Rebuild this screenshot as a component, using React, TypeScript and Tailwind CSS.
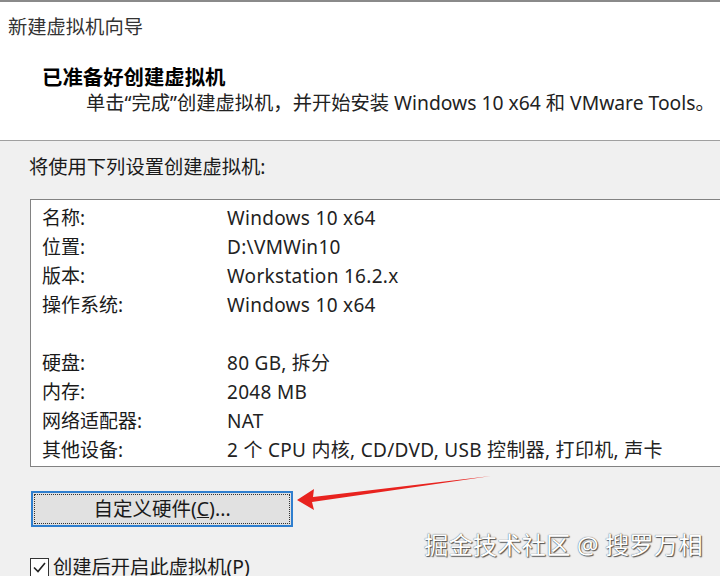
import React from 'react';

const font = '[font-family:"Noto_Sans","Noto_Sans_CJK_SC",sans-serif]';

const rows: [string, string][] = [
  ['名称:', 'Windows 10 x64'],
  ['位置:', 'D:\\VMWin10'],
  ['版本:', 'Workstation 16.2.x'],
  ['操作系统:', 'Windows 10 x64'],
  ['', ''],
  ['硬盘:', '80 GB, 拆分'],
  ['内存:', '2048 MB'],
  ['网络适配器:', 'NAT'],
  ['其他设备:', '2 个 CPU 内核, CD/DVD, USB 控制器, 打印机, 声卡'],
];

export default function App() {
  return (
    <div className={`relative w-[720px] h-[576px] overflow-hidden bg-[#f0f0f0] text-[#1a1a1a] ${font}`}>
      {/* header */}
      <div className="bg-white border-t-2 border-[#8a8a8a] border-b border-b-[#a0a0a0] h-[141px]">
        <div className="pl-[8px] pt-[12px] text-[19.3px] leading-[26px] text-[#333]">新建虚拟机向导</div>
        <div className="pl-[42px] pt-[24px] text-[20.4px] leading-[26px] font-bold text-black">已准备好创建虚拟机</div>
        <div className="pl-[86px] pt-[0px] text-[19.3px] leading-[26px] text-[#222] whitespace-nowrap">
          单击“完成”创建虚拟机，并开始安装 Windows 10 x64 和 VMware Tools。
        </div>
      </div>

      {/* body */}
      <div className="pl-[29px] pt-[13px] text-[19.3px] leading-[26px]">将使用下列设置创建虚拟机:</div>

      <div className="ml-[30px] mt-[19px] w-[720px] h-[268px] bg-white border border-[#828282] pt-[4px]">
        {rows.map(([k, v], i) => (
          <div key={i} className="flex h-[29px] items-center text-[19px]">
            <div className="w-[196px] pl-[11px] shrink-0">{k}</div>
            <div className="whitespace-nowrap text-[#222] tracking-[0.3px]">{v}</div>
          </div>
        ))}
      </div>

      <div className="ml-[31px] mt-[24px] w-[262px] h-[36px] border-2 border-[#2f7fcf] bg-[#e1e1e1] p-[1px]">
        <div className="h-full w-full border border-dotted border-[#333] flex items-center justify-center text-[19.5px]">
          自定义硬件(<span className="underline">C</span>)...
        </div>
      </div>

      <div className="ml-[30px] mt-[28px] flex items-center gap-[4px] text-[19.3px] leading-[24px]">
        <div className="w-[19px] h-[19px] border border-[#333] bg-white flex items-center justify-center">
          <svg width="15" height="15" viewBox="0 0 15 15">
            <path d="M2 7.5 L6 11.5 L13 3" fill="none" stroke="#222" strokeWidth="1.6" />
          </svg>
        </div>
        <span>创建后开启此虚拟机(P)</span>
      </div>

      {/* red arrow annotation */}
      <svg className="absolute left-0 top-0" width="720" height="576" viewBox="0 0 720 576">
        <polygon points="491,476 313,497 314,489 297,500 314,510 312,502" fill="#e8231f" />
      </svg>

      {/* watermark */}
      <div className="absolute left-[424px] top-[529px] text-[24.4px] leading-[32px] text-white [text-shadow:0_0_1px_#333,1px_1px_1px_#555] whitespace-nowrap">
        掘金技术社区 @ 搜罗万相
      </div>
    </div>
  );
}
